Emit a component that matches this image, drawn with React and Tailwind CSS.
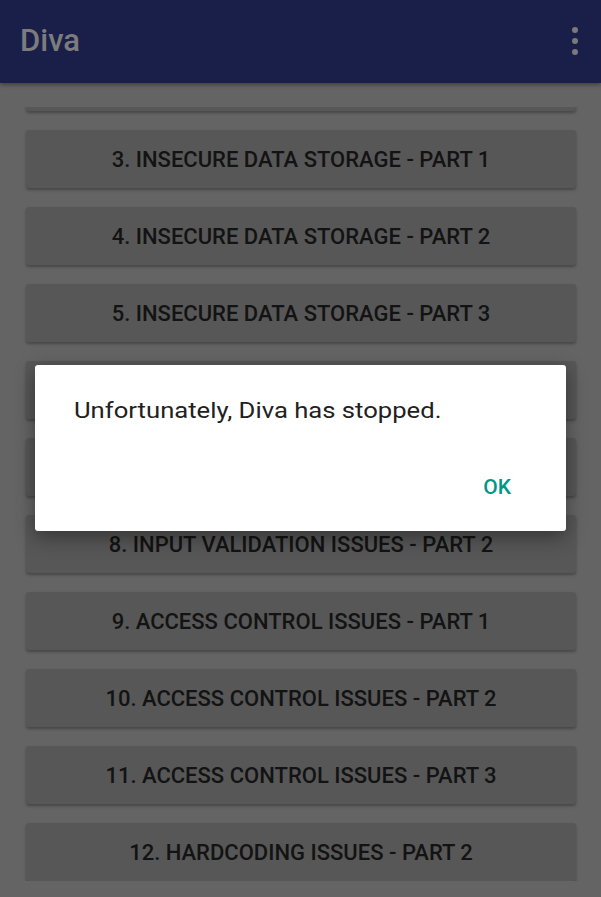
const items = [
  '2. LOG ISSUES',
  '3. INSECURE DATA STORAGE - PART 1',
  '4. INSECURE DATA STORAGE - PART 2',
  '5. INSECURE DATA STORAGE - PART 3',
  '6. INSECURE DATA STORAGE - PART 4',
  '7. INPUT VALIDATION ISSUES - PART 1',
  '8. INPUT VALIDATION ISSUES - PART 2',
  '9. ACCESS CONTROL ISSUES - PART 1',
  '10. ACCESS CONTROL ISSUES - PART 2',
  '11. ACCESS CONTROL ISSUES - PART 3',
  '12. HARDCODING ISSUES - PART 2',
];

export default function App() {
  return (
    <div className="relative w-[601px] h-[897px] overflow-hidden bg-[#646464] flex flex-col font-['Roboto',sans-serif]">
      {/* dimmed toolbar */}
      <div className="h-[83px] shrink-0 bg-[#1a1f4a] flex items-center justify-between pl-[20px] pr-[23px] pb-[2px] shadow-[0_2px_4px_rgba(0,0,0,0.35)] z-10">
        <span className="text-[31px] font-medium text-[#7c7c7c] leading-none">Diva</span>
        <div className="flex flex-col gap-[5px]">
          <div className="w-[6px] h-[6px] rounded-full bg-[#7a7a7a]" />
          <div className="w-[6px] h-[6px] rounded-full bg-[#7a7a7a]" />
          <div className="w-[6px] h-[6px] rounded-full bg-[#7a7a7a]" />
        </div>
      </div>

      {/* scrolled list, clipped to padding */}
      <div className="flex-1 flex flex-col pt-[24px] pb-[20px]">
        <div className="flex-1 overflow-hidden">
          <div className="mt-[-54px] flex flex-col gap-[19px] pl-[26px] pr-[25px]">
            {items.map((label) => (
              <div
                key={label}
                className="h-[58px] shrink-0 rounded-[3px] bg-[#575757] shadow-[0_2px_3px_rgba(0,0,0,0.3)] flex items-center justify-center pt-[2px] text-[22px] font-medium text-[#131313] leading-none"
              >
                {label}
              </div>
            ))}
          </div>
        </div>
      </div>

      {/* crash dialog */}
      <div className="absolute left-[35px] top-[365px] w-[531px] h-[166px] bg-white rounded-[3px] shadow-[0_6px_20px_rgba(0,0,0,0.4)] flex flex-col">
        <div className="pl-[39px] pt-[35px] leading-none">
          <span className="inline-block origin-left scale-x-[1.165] text-[22px] text-[#212121] leading-none whitespace-nowrap">
            Unfortunately, Diva has stopped.
          </span>
        </div>
        <div className="mt-auto flex justify-end pr-[55px] pb-[33px]">
          <span className="text-[21px] font-medium text-[#009688] leading-none">OK</span>
        </div>
      </div>
    </div>
  );
}
